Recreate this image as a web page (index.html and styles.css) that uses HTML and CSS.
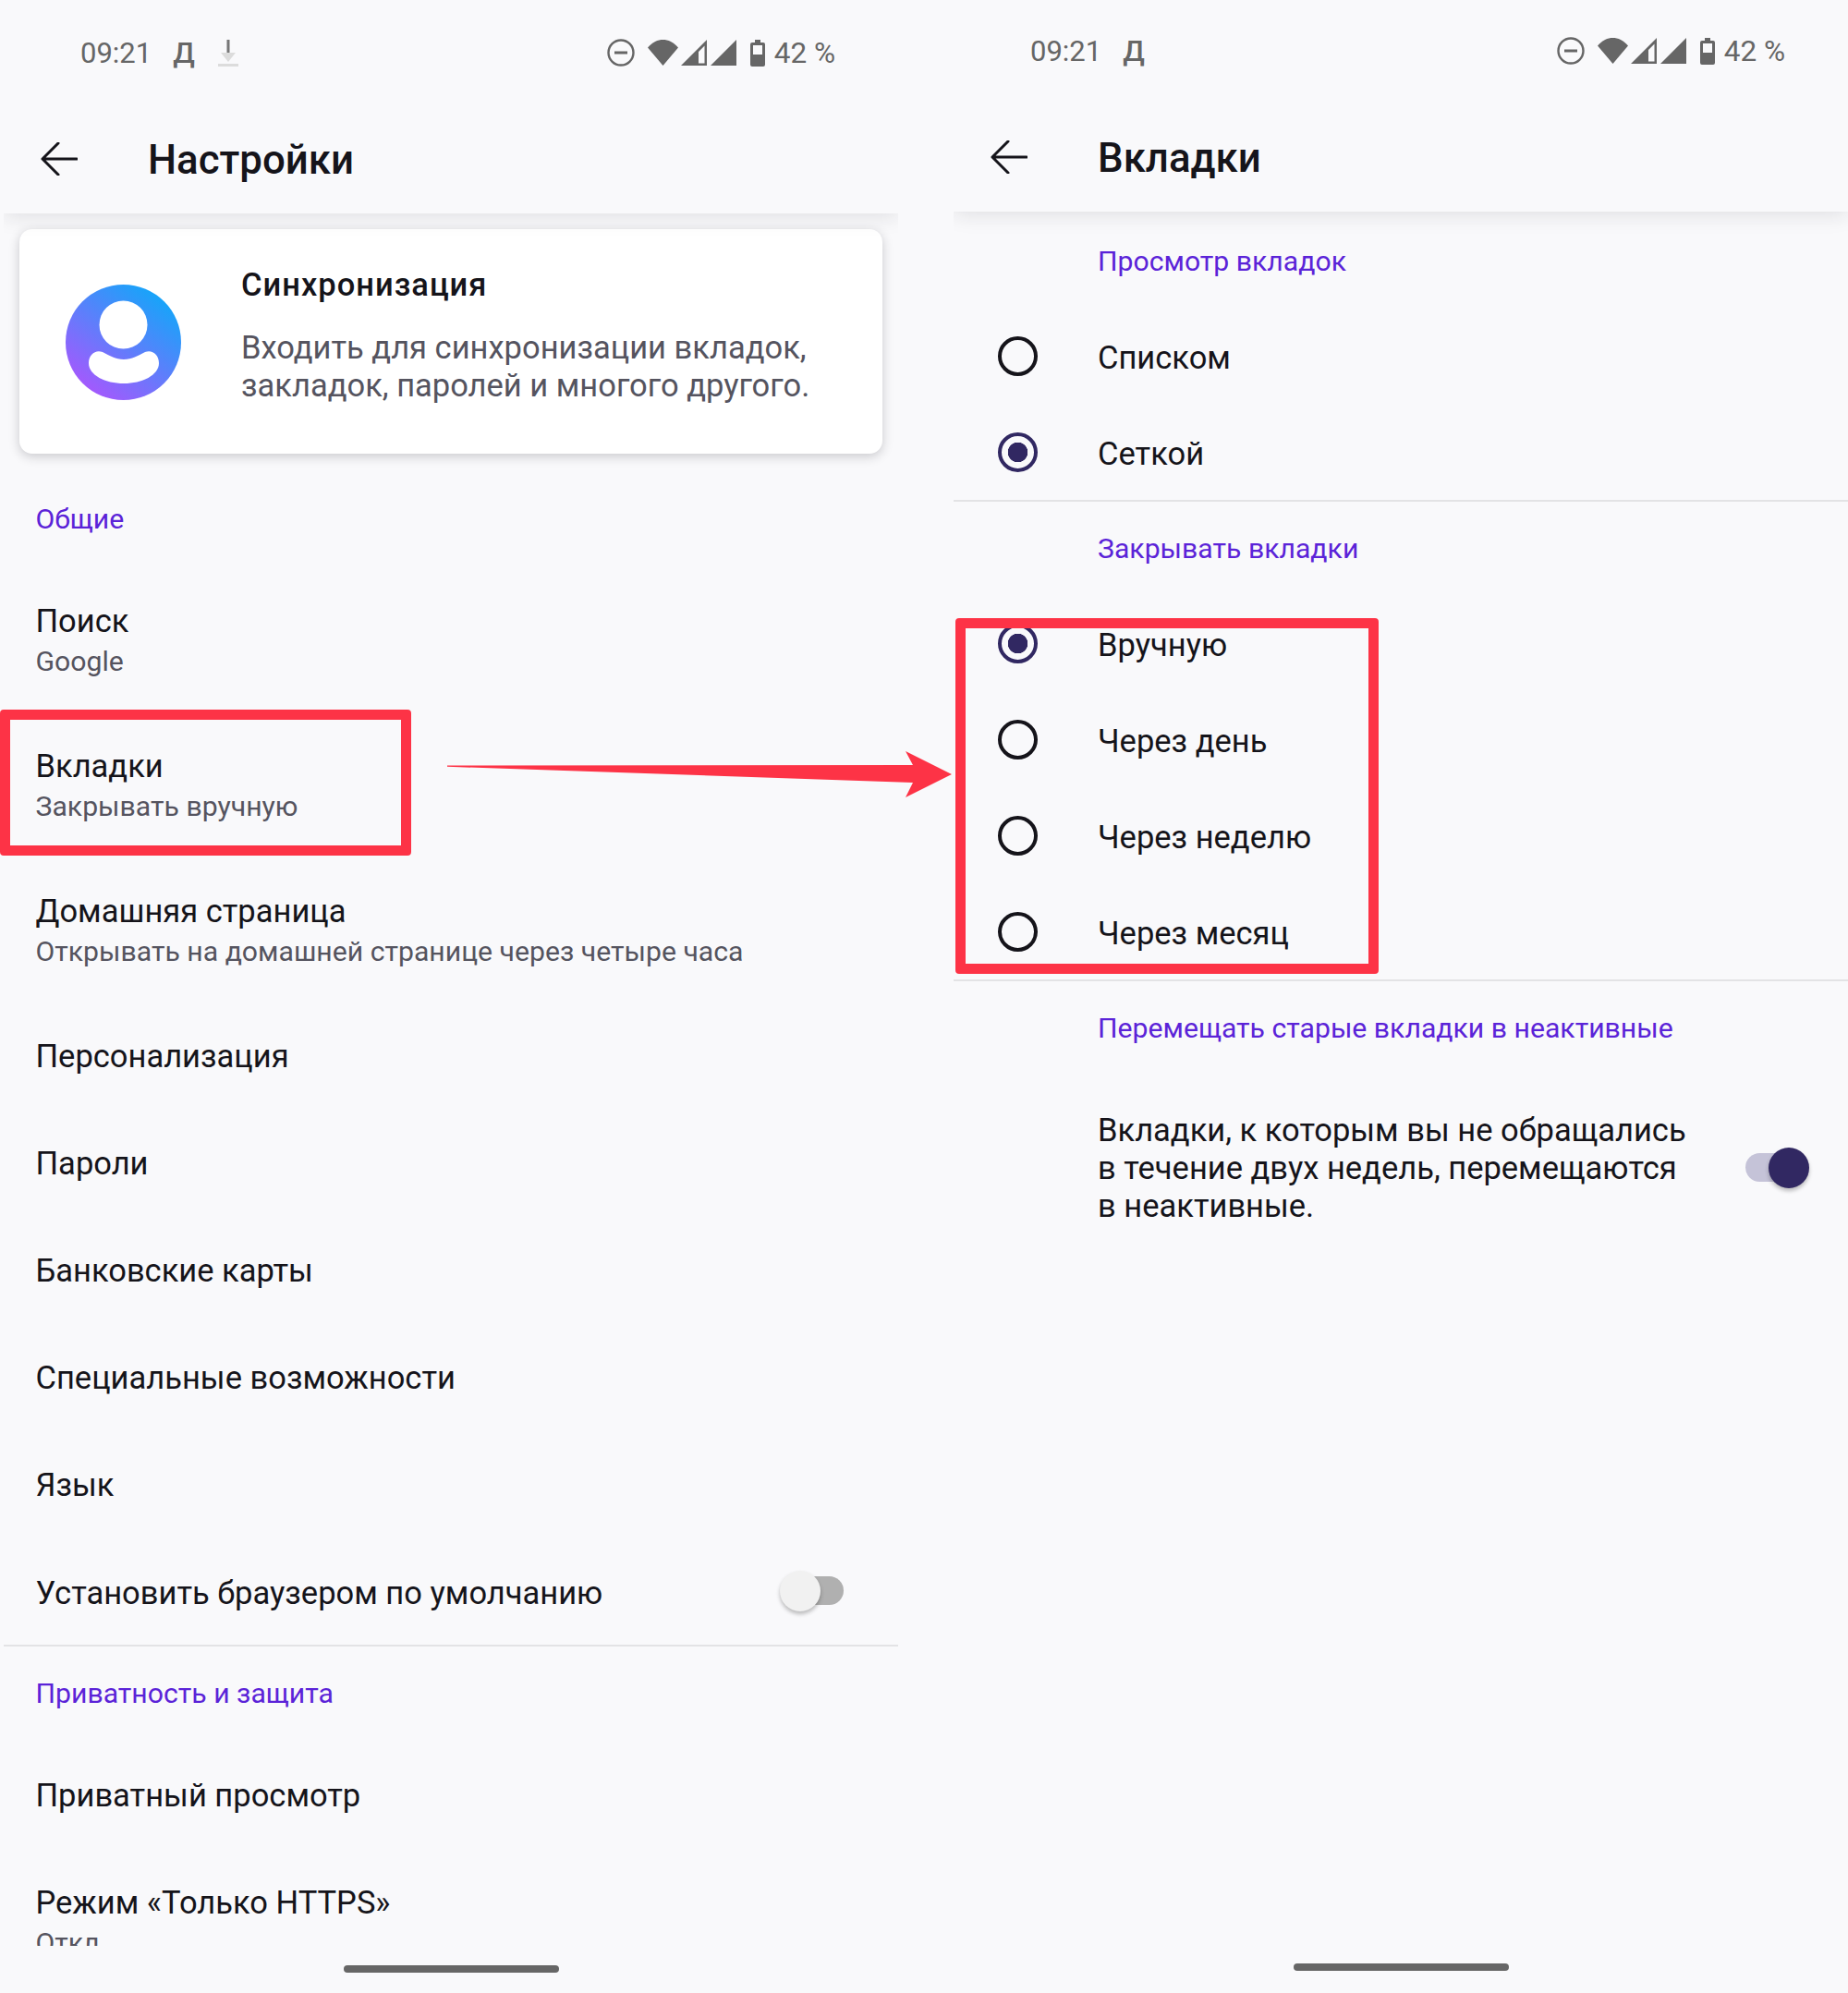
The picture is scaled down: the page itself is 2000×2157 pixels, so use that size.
FILE: index.html
```html
<!DOCTYPE html>
<html lang="ru">
  <head>
    <meta charset="UTF-8" />
    <meta name="viewport" content="width=device-width, initial-scale=1.0" />
    <title>Настройки и вкладки</title>
    <link rel="stylesheet" href="styles.css">
  </head>
  <body>
    <div class="screens">
      <section class="phone phone-settings">
        <div class="status">
          <span class="time">09:21</span>
          <span class="carrier">Д</span>
          <svg class="ico-download" width="22" height="29" viewBox="0 0 22 29">
            <rect x="9.5" y="0" width="3" height="14" fill="#777" />
            <path d="M3 14H19L11 24Z" fill="#dcdcdc" />
            <rect x="0" y="26" width="22" height="3" fill="#dcdcdc" />
          </svg>
          <div class="status-right">
            <svg class="ico-dnd" width="30" height="30" viewBox="0 0 30 30">
              <circle cx="15" cy="15" r="13.5" fill="none" stroke="#666" stroke-width="2.4" />
              <rect x="8" y="13.5" width="14" height="3" fill="#666" />
            </svg>
            <svg class="ico-wifi" width="33" height="28" viewBox="0 0 33 28">
              <path d="M16.5 28L0 8.5C5 2.5 11 0 16.5 0S28 2.5 33 8.5Z" fill="#666" />
            </svg>
            <svg class="ico-signal" width="28" height="28" viewBox="0 0 28 28">
              <path fill-rule="evenodd" d="M28 0V28H0ZM25.5 6.5L19 13V25.5H25.5Z" fill="#666" />
            </svg>
            <svg class="ico-signal2" width="28" height="28" viewBox="0 0 28 28">
              <path d="M28 0V28H0Z" fill="#666" />
            </svg>
            <svg class="ico-battery" width="16" height="29" viewBox="0 0 16 29">
              <path fill-rule="evenodd" d="M5 0H11V3H14Q16 3 16 5V27Q16 29 14 29H2Q0 29 0 27V5Q0 3 2 3H5ZM3 6V16H13V6Z" fill="#666" />
            </svg>
            <span class="percent">42 %</span>
          </div>
        </div>
        <header class="topbar">
          <svg class="back" width="40" height="36" viewBox="0 0 40 36">
            <path d="M39 18H2M19 1L2 18L19 35" fill="none" stroke="#15141a" stroke-width="3" stroke-linecap="round" stroke-linejoin="round" />
          </svg>
          <h1>Настройки</h1>
        </header>
        <div class="list">
          <div class="card">
            <svg class="avatar" width="125" height="125" viewBox="0 0 125 125">
              <defs>
                <linearGradient id="avatarFill" x1="0.85" y1="0.05" x2="0.2" y2="0.9">
                  <stop offset="0" stop-color="#0ea9f9" />
                  <stop offset="1" stop-color="#a25afd" />
                </linearGradient>
              </defs>
              <circle cx="62.5" cy="62.5" r="62.5" fill="url(#avatarFill)" />
              <circle cx="62.5" cy="43.5" r="26" fill="#fff" />
              <path d="M25 85C25 75 33 70 40 73C48 77 54 81 63 81C72 81 78 77 86 73C93 70 101 75 101 85C101 98 83 107 63 107C43 107 25 98 25 85Z" fill="#fff" />
            </svg>
            <div>
              <div class="card-title">Синхронизация</div>
              <div class="card-text">Входить для синхронизации вкладок,<br />закладок, паролей и многого другого.</div>
            </div>
          </div>

          <h2 class="heading heading-first">Общие</h2>
          <div class="row row-two"><div class="row-title">Поиск</div><div class="row-sub">Google</div></div>
          <div class="row row-two"><div class="row-title">Вкладки</div><div class="row-sub">Закрывать вручную</div></div>
          <div class="row row-two"><div class="row-title">Домашняя страница</div><div class="row-sub">Открывать на домашней странице через четыре часа</div></div>
          <div class="row"><div class="row-title">Персонализация</div></div>
          <div class="row"><div class="row-title">Пароли</div></div>
          <div class="row"><div class="row-title">Банковские карты</div></div>
          <div class="row"><div class="row-title">Специальные возможности</div></div>
          <div class="row"><div class="row-title">Язык</div></div>
          <div class="row row-switch">
            <div class="row-title">Установить браузером по умолчанию</div>
            <div class="toggle"><span class="knob"></span></div>
          </div>
          <hr class="divider" />
          <h2 class="heading heading-private">Приватность и защита</h2>
          <div class="row row-tall"><div class="row-title">Приватный просмотр</div></div>
          <div class="row row-two"><div class="row-title">Режим «Только HTTPS»</div><div class="row-sub">Откл</div></div>
        </div>
        <div class="homebar"></div>
      </section>

      <section class="phone phone-tabs">
        <div class="status">
          <span class="time">09:21</span>
          <span class="carrier">Д</span>
          <div class="status-right">
            <svg class="ico-dnd" width="30" height="30" viewBox="0 0 30 30">
              <circle cx="15" cy="15" r="13.5" fill="none" stroke="#666" stroke-width="2.4" />
              <rect x="8" y="13.5" width="14" height="3" fill="#666" />
            </svg>
            <svg class="ico-wifi" width="33" height="28" viewBox="0 0 33 28">
              <path d="M16.5 28L0 8.5C5 2.5 11 0 16.5 0S28 2.5 33 8.5Z" fill="#666" />
            </svg>
            <svg class="ico-signal" width="28" height="28" viewBox="0 0 28 28">
              <path fill-rule="evenodd" d="M28 0V28H0ZM25.5 6.5L19 13V25.5H25.5Z" fill="#666" />
            </svg>
            <svg class="ico-signal2" width="28" height="28" viewBox="0 0 28 28">
              <path d="M28 0V28H0Z" fill="#666" />
            </svg>
            <svg class="ico-battery" width="16" height="29" viewBox="0 0 16 29">
              <path fill-rule="evenodd" d="M5 0H11V3H14Q16 3 16 5V27Q16 29 14 29H2Q0 29 0 27V5Q0 3 2 3H5ZM3 6V16H13V6Z" fill="#666" />
            </svg>
            <span class="percent">42 %</span>
          </div>
        </div>
        <header class="topbar">
          <svg class="back" width="40" height="36" viewBox="0 0 40 36">
            <path d="M39 18H2M19 1L2 18L19 35" fill="none" stroke="#15141a" stroke-width="3" stroke-linecap="round" stroke-linejoin="round" />
          </svg>
          <h1>Вкладки</h1>
        </header>
        <div class="list">
          <h2 class="heading heading-indent heading-view">Просмотр вкладок</h2>
          <div class="option"><span class="radio"></span><span class="row-title">Списком</span></div>
          <div class="option"><span class="radio radio-on"></span><span class="row-title">Сеткой</span></div>
          <hr class="divider" />
          <h2 class="heading heading-indent heading-close">Закрывать вкладки</h2>
          <div class="option"><span class="radio radio-on"></span><span class="row-title">Вручную</span></div>
          <div class="option"><span class="radio"></span><span class="row-title">Через день</span></div>
          <div class="option"><span class="radio"></span><span class="row-title">Через неделю</span></div>
          <div class="option"><span class="radio"></span><span class="row-title">Через месяц</span></div>
          <hr class="divider" />
          <h2 class="heading heading-indent heading-move">Перемещать старые вкладки в неактивные</h2>
          <div class="inactive-row">
            <div class="row-title">Вкладки, к которым вы не обращались<br />в течение двух недель, перемещаются<br />в неактивные.</div>
            <div class="toggle toggle-on"><span class="knob"></span></div>
          </div>
        </div>
        <div class="homebar"></div>
      </section>
    </div>

    <!-- red annotations lying over the two screens -->
    <div class="mark mark-row"></div>
    <div class="mark mark-options"></div>
    <svg class="mark-arrow" width="560" height="60" viewBox="0 0 560 60">
      <path d="M4 18.5L508 18L500 3L550 28L500 53L508 37L4 19.8Z" fill="#fd3346" />
    </svg>
  </body>
</html>
```

FILE: styles.css
```css
body {
  margin: 0;
  background: #f9f9fb;
  font-family: Roboto, "Noto Sans", sans-serif;
  color: #15141a;
}

.screens {
  display: flex;
  gap: 60px;
  padding-left: 4px;
}

.phone {
  width: 968px;
  height: 2157px;
  overflow: hidden;
  display: flex;
  flex-direction: column;
  box-sizing: border-box;
}

.phone-settings {
  padding-top: 2px;
}

/* status bar */
.status {
  height: 110px;
  flex: none;
  display: flex;
  align-items: center;
  padding: 0 68px 0 83px;
  font-size: 31.5px;
  color: #666;
}

.time {
  font-size: 31px;
}

.carrier {
  margin-left: 23px;
  font-weight: 500;
}

.ico-download {
  margin-left: 25px;
}

.status-right {
  margin-left: auto;
  display: flex;
  align-items: center;
}

.ico-wifi {
  margin-left: 14px;
}

.ico-signal {
  margin-left: 3px;
}

.ico-signal2 {
  margin-left: 4px;
}

.ico-battery {
  margin-left: 15px;
}

.percent {
  margin-left: 10px;
}

/* top bar */
.topbar {
  height: 119px;
  flex: none;
  position: relative;
  z-index: 1;
  display: flex;
  align-items: center;
  padding-left: 40px;
  background: #f9f9fb;
  box-shadow: 0 2px 22px rgba(30, 30, 40, 0.13);
  clip-path: inset(0 0 -40px 0);
}

.topbar h1 {
  margin: 2px 0 0 76px;
  font-size: 43.8px;
  font-weight: 500;
}

.back {
  flex: none;
}

.list {
  height: 1875px;
  flex: none;
  overflow: hidden;
}

/* sync card */
.card {
  height: 243px;
  margin: 17px 17px 0;
  padding: 40px 0 0 50px;
  box-sizing: border-box;
  display: flex;
  gap: 65px;
  background: #fff;
  border-radius: 14px;
  box-shadow: 0 3px 12px rgba(30, 30, 40, 0.22);
}

.avatar {
  flex: none;
  margin-top: 20px;
}

.card-title {
  font-size: 34.5px;
  font-weight: 500;
  letter-spacing: 1px;
  line-height: 41px;
  margin-bottom: 27px;
}

.card-text {
  font-size: 34.5px;
  line-height: 41px;
  color: #55545f;
}

/* rows */
.heading {
  height: 102px;
  margin: 0;
  padding-left: 34.5px;
  box-sizing: border-box;
  display: flex;
  align-items: center;
  font-size: 30.2px;
  font-weight: 400;
  color: #5b23d8;
}

.heading-first {
  margin-top: 22px;
  padding-bottom: 6px;
}

.heading-private {
  padding-bottom: 2px;
}

.heading-indent {
  padding-left: 156px;
}

.heading-view {
  height: 103px;
  margin-top: 1px;
  padding-top: 2px;
}

.heading-close {
  height: 101px;
}

.heading-move {
  padding-bottom: 2px;
}

.row {
  height: 116px;
  padding: 0 59px 2px 34.5px;
  box-sizing: border-box;
  display: flex;
  flex-direction: column;
  justify-content: center;
}

.row-two {
  height: 157px;
  padding-top: 3px;
}

.row-tall {
  height: 118px;
  padding-bottom: 0;
}

.row-switch {
  height: 114px;
  padding-bottom: 0;
  flex-direction: row;
  align-items: center;
  justify-content: space-between;
}

.row-switch .row-title {
  margin-top: 2px;
}

.row-switch .toggle {
  margin-top: -4px;
}

.row-title {
  font-size: 34.5px;
  line-height: 41px;
}

.row-sub {
  margin-top: 2px;
  font-size: 30.2px;
  line-height: 41px;
  color: #55545f;
}

.divider {
  height: 2px;
  margin: 0;
  border: none;
  background: #e3e3e5;
}

/* radio options */
.option {
  height: 104px;
  padding-left: 48px;
  display: flex;
  align-items: center;
  gap: 65px;
}

.option .row-title {
  margin-top: 4px;
}

.radio {
  width: 43px;
  height: 43px;
  box-sizing: border-box;
  flex: none;
  border: 4.5px solid #15141a;
  border-radius: 50%;
}

.radio-on {
  border-color: #312862;
  background: radial-gradient(circle, #312862 0, #312862 10.5px, transparent 11px);
}

.inactive-row {
  height: 200px;
  padding: 0 47px 0 156px;
  display: flex;
  align-items: center;
  justify-content: space-between;
}

.inactive-row .toggle {
  margin-top: -2px;
}

/* switches */
.toggle {
  width: 64px;
  height: 31px;
  flex: none;
  position: relative;
  border-radius: 16px;
  background: #b0b0b0;
}

.knob {
  position: absolute;
  left: -5px;
  top: -6px;
  width: 44px;
  height: 44px;
  border-radius: 50%;
  background: #f1f1f1;
  box-shadow: 0 3px 4px rgba(0, 0, 0, 0.25);
}

.toggle-on {
  background: #c5c3d8;
}

.toggle-on .knob {
  left: auto;
  right: -5px;
  background: #312862;
}

.homebar {
  width: 233px;
  height: 8px;
  flex: none;
  margin: 21px auto 0;
  border-radius: 4px;
  background: #666;
}

/* annotations */
.mark {
  position: absolute;
  box-sizing: border-box;
  border: 11px solid #fd3346;
  border-radius: 4px;
}

.mark-row {
  left: 0;
  top: 768px;
  width: 445px;
  height: 158px;
}

.mark-options {
  left: 1034px;
  top: 669px;
  width: 458px;
  height: 385px;
}

.mark-arrow {
  position: absolute;
  left: 480px;
  top: 810px;
}
```
